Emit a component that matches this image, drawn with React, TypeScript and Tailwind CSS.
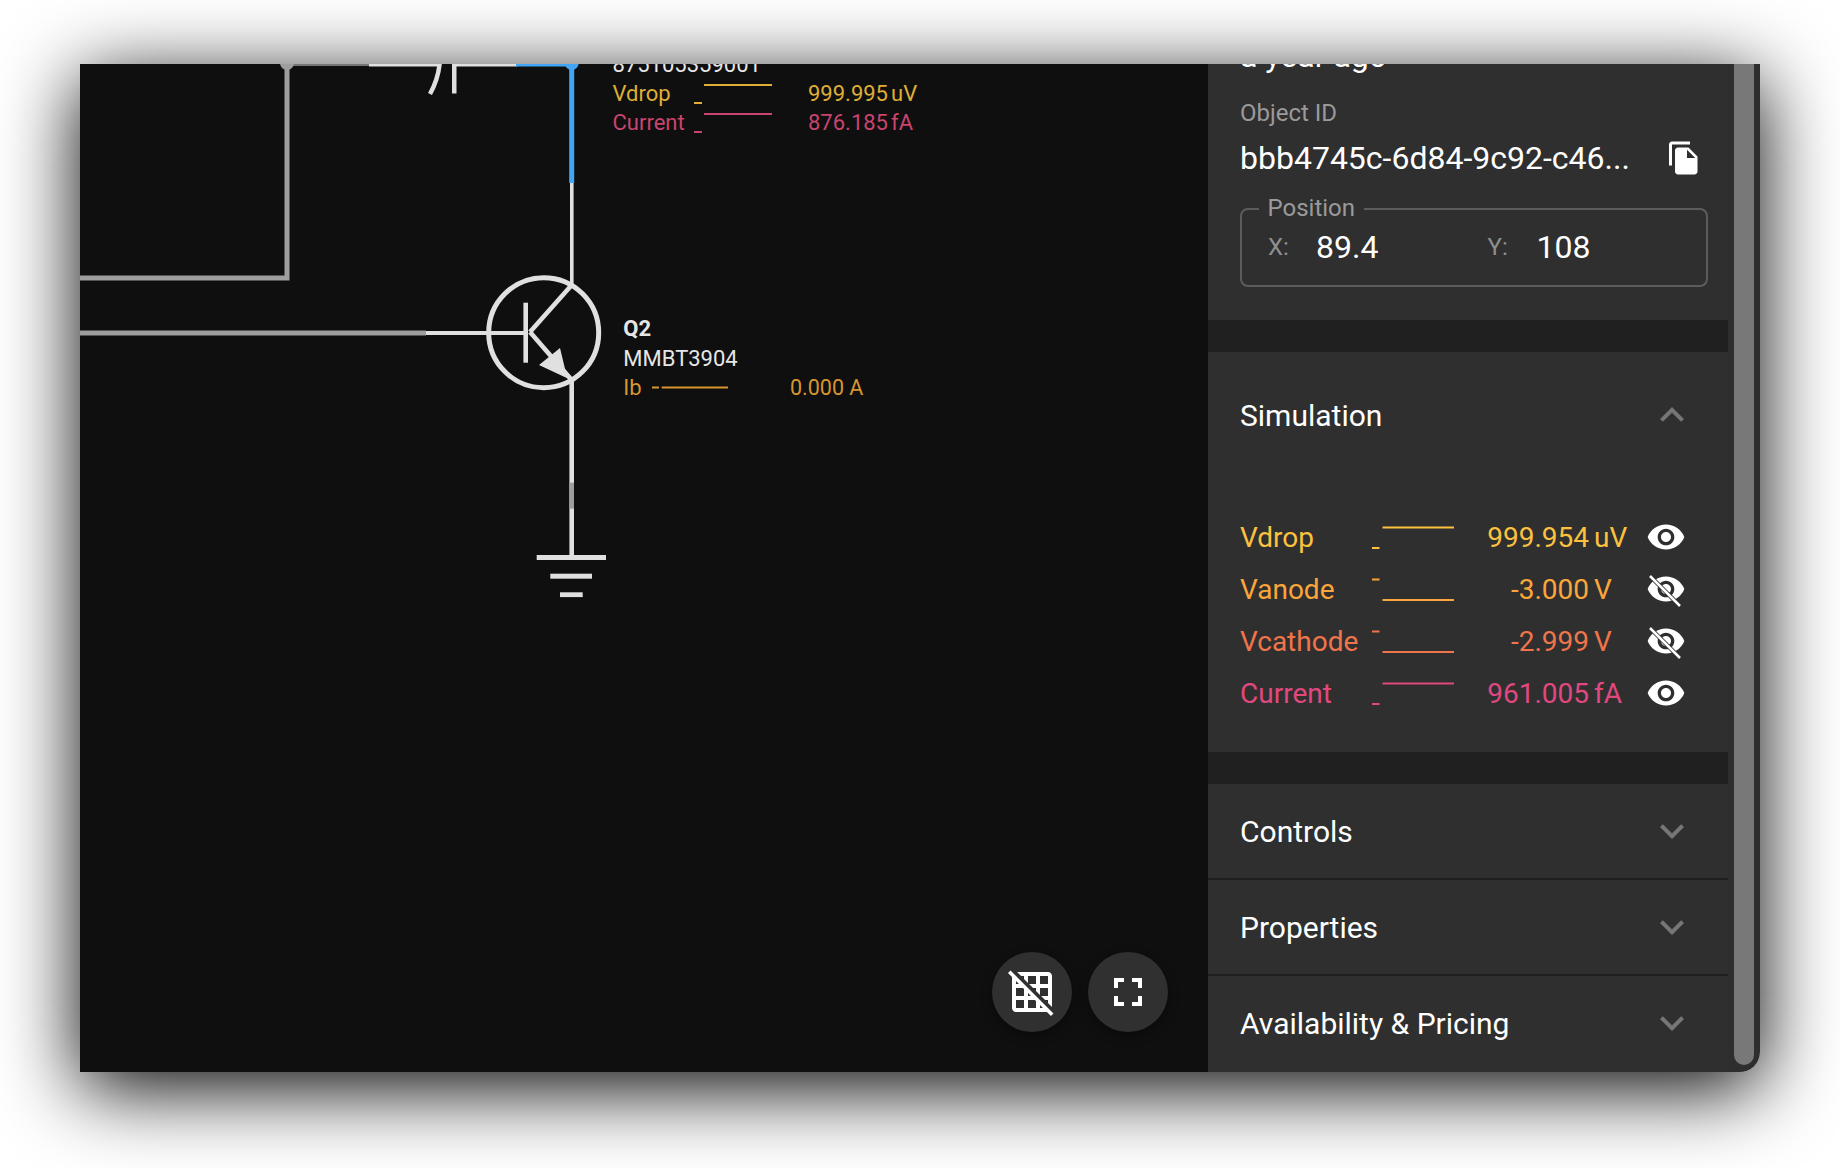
import React from "react";
import { MdExpandMore, MdExpandLess, MdFileCopy, MdFullscreen, MdGridOff, MdVisibility } from "react-icons/md";

const eyePath =
  "M12 4.5C7 4.5 2.73 7.61 1 12c1.73 4.39 6 7.5 11 7.5s9.27-3.11 11-7.5c-1.73-4.39-6-7.5-11-7.5zM12 17c-2.76 0-5-2.24-5-5s2.24-5 5-5 5 2.24 5 5-2.24 5-5 5zm0-8c-1.66 0-3 1.34-3 3s1.34 3 3 3 3-1.34 3-3-1.34-3-3-3z";

function EyeOff() {
  return (
    <svg viewBox="0 0 24 24" className="w-[40px] h-[40px] shrink-0">
      <path d={eyePath} fill="#ffffff" />
      <path d="M2.4 4.2 L20.4 22.2" stroke="#2f2f2f" strokeWidth="2.5" />
      <path d="M2.4 4.2 L20.4 22.2" stroke="#ffffff" strokeWidth="1.5" />
    </svg>
  );
}

function Spark({ high, color }: { high: boolean; color: string }) {
  return (
    <svg viewBox="0 0 82 40" className="w-[82px] h-[40px] shrink-0">
      <rect x="0" y={high ? 30 : 9.5} width="7.5" height="2" fill={color} />
      <rect x="10.5" y={high ? 9.5 : 30} width="72" height="2" fill={color} />
    </svg>
  );
}

function MiniSpark({ color }: { color: string }) {
  return (
    <svg viewBox="0 0 78 29" className="w-[78px] h-[29px] shrink-0">
      <rect x="0" y="23" width="8" height="2" fill={color} />
      <rect x="10" y="5" width="68" height="2" fill={color} />
    </svg>
  );
}

function SimRow(p: { label: string; high: boolean; num: string; unit: string; color: string; on: boolean }) {
  return (
    <div className="flex items-center h-[52px] text-[28px]" style={{ color: p.color }}>
      <span className="w-[132px] shrink-0 whitespace-nowrap pt-[2px]">{p.label}</span>
      <Spark high={p.high} color={p.color} />
      <span className="w-[135px] shrink-0 text-right pt-[2px]">{p.num}</span>
      <span className="w-[57px] shrink-0 pl-[5px] pt-[2px]">{p.unit}</span>
      {p.on ? <MdVisibility className="w-[40px] h-[40px] text-white shrink-0" /> : <EyeOff />}
    </div>
  );
}

function Section({ title, last }: { title: string; last?: boolean }) {
  return (
    <div className={`flex items-center justify-between pl-[32px] pr-[32px] ${last ? "h-[94px]" : "h-[96px] border-b-2 border-[#1f1f1f]"}`}>
      <span className="text-[30px] text-white">{title}</span>
      <MdExpandMore className="w-[48px] h-[48px] text-[#767676]" />
    </div>
  );
}

function Schematic() {
  const grey = "#9e9e9e";
  const white = "#e0e0e0";
  const blue = "#42a5f5";
  return (
    <svg viewBox="80 64 1128 1008" className="absolute inset-0 w-[1128px] h-[1008px]">
      {/* top wire */}
      <rect x="287" y="64" width="83" height="2" fill="#757575" />
      <rect x="369" y="64" width="72" height="2.5" fill={white} />
      <rect x="456" y="64" width="61" height="2.5" fill={white} />
      <rect x="516" y="64" width="56" height="2.5" fill={blue} />
      <circle cx="287" cy="63" r="7" fill={grey} />
      <circle cx="571.7" cy="63" r="7" fill={blue} />
      {/* capacitor */}
      <path d="M440 60 C439 75 435 85 430 94" fill="none" stroke={white} strokeWidth="4.5" />
      <rect x="452" y="60" width="4.5" height="33.5" fill={white} />
      {/* grey net */}
      <path d="M80 278 H287 V64" fill="none" stroke={grey} strokeWidth="5" />
      <rect x="80" y="330.5" width="346" height="5" fill={grey} />
      <rect x="426" y="331" width="100" height="4" fill={white} />
      {/* collector wire */}
      <rect x="569.2" y="64" width="5" height="119" fill={blue} />
      <rect x="570" y="183" width="3.6" height="102" fill={white} />
      {/* transistor */}
      <circle cx="543.7" cy="332.7" r="55" fill="none" stroke={white} strokeWidth="5" />
      <rect x="523.4" y="302.7" width="4.6" height="60" fill={white} />
      <path d="M530 332 L571.7 285" stroke={white} strokeWidth="4.6" fill="none" />
      <path d="M530 332 L571.7 380" stroke={white} strokeWidth="4.6" fill="none" />
      <polygon points="560,348 566,373 571,380 539,365" fill={white} />
      {/* emitter wire and ground */}
      <rect x="569.4" y="380" width="4.6" height="175" fill={white} />
      <rect x="569.4" y="482.7" width="4.6" height="26" fill={grey} />
      <rect x="536.7" y="555" width="69.3" height="5" fill={white} />
      <rect x="550.3" y="573.7" width="41.7" height="5" fill={white} />
      <rect x="560" y="592.3" width="22.7" height="4.8" fill={white} />
    </svg>
  );
}

export default function App() {
  const vdropC = "#dfae35";
  const currentC = "#c9446f";
  const ibC = "#d8952f";
  return (
    <div className="w-[1840px] h-[1168px] bg-white pl-[80px] pt-[64px] overflow-hidden font-['Roboto',sans-serif]">
      <div className="flex w-[1680px] h-[1008px] rounded-br-[20px] shadow-[0_16px_80px_rgba(0,0,0,1)]">
        {/* canvas */}
        <div className="relative w-[1128px] h-full bg-[#0f0f0f] overflow-hidden">
          <Schematic />

          <div className="absolute left-[532.5px] top-[-14.5px] text-[22px] leading-[29px] whitespace-nowrap">
            <div className="text-[#e6e6e6]">875105359001</div>
            <div className="flex items-center h-[29px]" style={{ color: vdropC }}>
              <span className="w-[81.5px]">Vdrop</span>
              <MiniSpark color={vdropC} />
              <span className="ml-[36px]">999.995<span className="ml-[3px]">uV</span></span>
            </div>
            <div className="flex items-center h-[29px]" style={{ color: currentC }}>
              <span className="w-[81.5px]">Current</span>
              <MiniSpark color={currentC} />
              <span className="ml-[36px]">876.185<span className="ml-[3px]">fA</span></span>
            </div>
          </div>

          <div className="absolute left-[543.3px] top-[250.4px] text-[22px] leading-[29.3px] whitespace-nowrap text-[#e6e6e6]">
            <div className="font-bold">Q2</div>
            <div>MMBT3904</div>
            <div className="flex items-center" style={{ color: ibC }}>
              <span className="w-[29px]">Ib</span>
              <svg viewBox="0 0 76 29" className="w-[76px] h-[29px] shrink-0">
                <rect x="0" y="13.5" width="7" height="2" fill={ibC} />
                <rect x="9.7" y="13.5" width="66.3" height="2" fill={ibC} />
              </svg>
              <span className="ml-[61.7px] text-[21.5px]">0.000 A</span>
            </div>
          </div>

          <div className="absolute right-[40px] bottom-[40px] flex gap-[16px]">
            <div className="w-[80px] h-[80px] rounded-full bg-[#303030] flex items-center justify-center shadow-[0_4px_12px_rgba(0,0,0,0.3)]">
              <MdGridOff className="w-[48px] h-[48px] text-white" />
            </div>
            <div className="w-[80px] h-[80px] rounded-full bg-[#303030] flex items-center justify-center shadow-[0_4px_12px_rgba(0,0,0,0.3)]">
              <MdFullscreen className="w-[48px] h-[48px] text-white" />
            </div>
          </div>
        </div>

        {/* sidebar */}
        <div className="flex flex-1 h-full bg-[#2e2e2e] rounded-br-[20px] overflow-hidden">
          <div className="w-[520px] h-full bg-[#2f2f2f] overflow-hidden rounded-b-[6px] shrink-0">
            <div className="-mt-[26px] pl-[32px] pr-[20px] text-[32px] leading-[36px] text-white">a year ago</div>
            <div className="pl-[32px] pr-[20px]">
              <div className="mt-[24px] text-[24px] leading-[30px] text-[#9a9a9a]">Object ID</div>
              <div className="flex items-center justify-between h-[40px] mt-[10px]">
                <span className="text-[32px] text-white whitespace-nowrap">bbb4745c-6d84-9c92-c46...</span>
                <MdFileCopy className="w-[36px] h-[36px] text-white mr-[6px]" />
              </div>
              <fieldset className="h-[92px] mt-[17px] border-2 border-[#5c5c5c] rounded-[8px] text-[#8f8f8f]">
                <legend className="ml-[16.5px] px-[9px] h-[28px] text-[24px] leading-[26px] text-[#9a9a9a]">Position</legend>
                <div className="flex items-center h-[40px] mt-[4px] pl-[26px] whitespace-nowrap">
                  <span className="w-[48px] text-[24px]">X:</span>
                  <span className="w-[171.5px] text-[32px] text-white">89.4</span>
                  <span className="w-[49px] text-[24px]">Y:</span>
                  <span className="text-[32px] text-white">108</span>
                </div>
              </fieldset>
            </div>
            <div className="h-[32px] mt-[33px] bg-[#202020]" />
            <div className="flex items-center justify-between h-[126px] pl-[32px] pr-[32px]">
              <span className="text-[30px] text-white">Simulation</span>
              <MdExpandLess className="w-[48px] h-[48px] text-[#767676]" />
            </div>
            <div className="pl-[32px] mt-[33px]">
              <SimRow label="Vdrop" high num="999.954" unit="uV" color="#fbc13f" on />
              <SimRow label="Vanode" high={false} num="-3.000" unit="V" color="#fba63a" on={false} />
              <SimRow label="Vcathode" high={false} num="-2.999" unit="V" color="#f0754a" on={false} />
              <SimRow label="Current" high num="961.005" unit="fA" color="#e0487f" on />
            </div>
            <div className="h-[32px] mt-[33px] bg-[#202020]" />
            <Section title="Controls" />
            <Section title="Properties" />
            <Section title="Availability & Pricing" last />
          </div>
          <div className="w-[20px] h-[1001px] ml-[6px] bg-[#787878] rounded-b-[10px]" />
        </div>
      </div>
    </div>
  );
}
